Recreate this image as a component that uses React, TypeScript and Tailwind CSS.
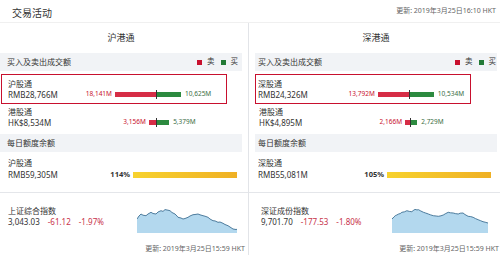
import React from "react";

type Flow = { name: string; total: string; sell: number; buy: number; sellLabel: string; buyLabel: string };

type Panel = {
  title: string;
  north: Flow;
  south: Flow;
  quota: { name: string; value: string; pct: string };
  index: { name: string; value: string; chg: string; pct: string; points: string; update: string };
};

const LEFT: Panel = {
  title: "沪港通",
  north: { name: "沪股通", total: "RMB28,766M", sell: 18141, buy: 10625, sellLabel: "18,141M", buyLabel: "10,625M" },
  south: { name: "港股通", total: "HK$8,534M", sell: 3156, buy: 5379, sellLabel: "3,156M", buyLabel: "5,379M" },
  quota: { name: "沪股通", value: "RMB59,305M", pct: "114%" },
  index: {
    name: "上证综合指数",
    value: "3,043.03",
    chg: "-61.12",
    pct: "-1.97%",
    points:
      "0,10 2,7 4,5 6,6.2 9,6.7 11,5 14,3.3 16,4.5 19,5 21,3 24,1.7 26,2.4 28,0.6 31,1.2 33,1.7 35,3.5 38,5 40,7 41,8.3 44,9 46,10 48,9.5 51,8.3 53,7 56,5.7 58,5.5 61,5 63,5.8 66,6.7 68,7.2 71,8.3 73,10 76,11.7 78,11.9 81,13.3 83,13 86,14.3 88,15.5 91,16.7 93,18 96,20 99,20.5 100,20.3",
    update: "更新: 2019年3月25日15:59 HKT",
  },
};

const RIGHT: Panel = {
  title: "深港通",
  north: { name: "深股通", total: "RMB24,326M", sell: 13792, buy: 10534, sellLabel: "13,792M", buyLabel: "10,534M" },
  south: { name: "港股通", total: "HK$4,895M", sell: 2166, buy: 2729, sellLabel: "2,166M", buyLabel: "2,729M" },
  quota: { name: "深股通", value: "RMB55,081M", pct: "105%" },
  index: {
    name: "深证成份指数",
    value: "9,701.70",
    chg: "-177.53",
    pct: "-1.80%",
    points:
      "0,10 2,8 3.4,6.7 5,6 6.9,5 8.5,4.6 10.3,3.3 13,2.8 15.5,1.7 18,2.4 20.7,2.7 22,1.6 24,0.4 26,0.9 27.6,0.7 30,2 32.8,3.3 35,4 37.9,5 40,5.8 43,6.7 46,7 48.3,7.3 51,6.8 53.4,6 56,4.5 58.6,3.3 61,3.8 63.8,4 66,4.6 69,5 71,4.2 74,4 76,5.5 79.3,7.3 82,7.6 84.5,8.3 87,9.6 89.7,10.7 92,11.6 94.8,12.7 97,13.2 100,14",
    update: "更新: 2019年3月25日15:59 HKT",
  },
};

const SCALE = 442;

function Bars({ f, leftW }: { f: Flow; leftW: string }) {
  return (
    <div className="flex items-center h-[11px]">
      <div className={`${leftW} flex items-center justify-end gap-[3px]`}>
        <span className="text-[6.5px] text-[#c8102e] leading-none">{f.sellLabel}</span>
        <div className="h-[5px] bg-[#d62d46]" style={{ width: f.sell / SCALE }} />
      </div>
      <div className="w-[1px] h-[9px] bg-[#333]" />
      <div className="flex items-center gap-[4px]">
        <div className="h-[5px] bg-[#2c8a3f]" style={{ width: f.buy / SCALE }} />
        <span className="text-[6.5px] text-[#3c6e45] leading-none">{f.buyLabel}</span>
      </div>
    </div>
  );
}

function PanelView({ p, isLeft }: { p: Panel; isLeft: boolean }) {
  const padText = isLeft ? "pl-[8px]" : "pl-[3px]";
  const labelW = "w-[60px]";
  const leftW = isLeft ? "w-[88px]" : "w-[91px]";
  return (
    <div className="w-[242px] flex flex-col">
      <div className="h-[30px] flex items-center justify-center text-[9px] text-[#333]">{p.title}</div>
      <div className={`h-[18px] bg-[#f1f3f6] flex items-center justify-between ${isLeft ? "pl-[7px] pr-[4px]" : "pl-[3px] pr-[1px]"} text-[8px] text-[#333]`}>
        <span>买入及卖出成交额</span>
        <div className="flex items-center text-[7.5px]">
          <span className="w-[5px] h-[5px] bg-[#c8102e]" />
          <span className="ml-[5px]">卖</span>
          <span className="ml-[6px] w-[5px] h-[5px] bg-[#237a36]" />
          <span className="ml-[5px]">买</span>
        </div>
      </div>
      <div className={`mt-[3px] h-[30px] border border-[#c8102e] ${isLeft ? "ml-[1px] w-[226px] pl-[6px]" : "w-[216px] pl-[2px]"} pt-[3px] text-[8px] text-[#333]`}>
        <div className="h-[11px] leading-[11px]">{p.north.name}</div>
        <div className="flex items-center h-[11px]">
          <span className={`${labelW} leading-[11px]`}>{p.north.total}</span>
          <Bars f={p.north} leftW={leftW} />
        </div>
      </div>
      <div className={`h-[30px] pt-[2px] ${isLeft ? "pl-[8px]" : "pl-[4px]"} text-[8px] text-[#333]`}>
        <div className="h-[11px] leading-[11px]">{p.south.name}</div>
        <div className="flex items-center h-[11px]">
          <span className={`${labelW} leading-[11px]`}>{p.south.total}</span>
          <Bars f={p.south} leftW={leftW} />
        </div>
      </div>
      <div className={`h-[18px] bg-[#f1f3f6] flex items-center ${isLeft ? "pl-[7px]" : "pl-[3px]"} text-[8px] text-[#333]`}>
        每日额度余额
      </div>
      <div className={`h-[40px] pt-[5px] ${padText} ${isLeft ? "pr-[5px]" : "pr-[6px]"} text-[8px] text-[#333]`}>
        <div className="h-[11px] leading-[11px]">{p.quota.name}</div>
        <div className="mt-[1px] h-[11px] flex items-center">
          <span className="flex-1 leading-[11px]">{p.quota.value}</span>
          <span className="font-bold text-[7.5px] leading-none">{p.quota.pct}</span>
          <div className="ml-[3px] w-[104px] h-[6px] bg-gradient-to-r from-[#f7d22e] to-[#efb024]" />
        </div>
      </div>
    </div>
  );
}

function IndexView({ p, isLeft }: { p: Panel; isLeft: boolean }) {
  const pts = p.index.points;
  return (
    <div className="w-[242px] flex flex-col">
      <div className="flex pt-[12px]">
        <div className={`flex-1 ${isLeft ? "pl-[8px]" : "pl-[6px]"} text-[8px] text-[#333]`}>
          <div className="h-[11px] leading-[11px]">{p.index.name}</div>
          <div className="h-[11px] leading-[11px] flex">
            <span>{p.index.value}</span>
            <span className="ml-[8px] text-[#c8334a]">{p.index.chg}</span>
            <span className="ml-[8px] text-[#c8334a]">{p.index.pct}</span>
          </div>
        </div>
        <svg
          className={`mt-[4px] h-[24px] ${isLeft ? "w-[100px] mr-[5px]" : "w-[96px] mr-[9px]"}`}
          viewBox="0 0 100 24"
          preserveAspectRatio="none"
        >
          <polygon points={`0,24 ${pts} 100,24`} fill="#b3d8ee" />
          <polyline points={pts} fill="none" stroke="#3d6f93" strokeWidth="0.9" vectorEffect="non-scaling-stroke" />
        </svg>
      </div>
      <div className={`mt-[11px] h-[10px] leading-[10px] text-right text-[7px] text-[#666] ${isLeft ? "-mr-[3px]" : "-mr-[2px]"}`}>
        {p.index.update}
      </div>
    </div>
  );
}

export default function App() {
  return (
    <div
      className="w-[500px] h-[255px] bg-white overflow-hidden flex flex-col"
      style={{ fontFamily: '"Noto Sans", "Noto Sans CJK SC", sans-serif' }}
    >
      <div className="h-[22px] flex items-start justify-between">
        <span className="pl-[12px] pt-[7px] text-[10px] leading-[12px] text-[#333]">交易活动</span>
        <span className="pr-[4px] pt-[6px] text-[7px] leading-[10px] text-[#666]">更新: 2019年3月25日16:10 HKT</span>
      </div>
      <div className="flex flex-1 border-t border-[#f0f0f0]">
        <div className="w-[249px] border-r border-[#e2e4e8] flex flex-col">
          <PanelView p={LEFT} isLeft={true} />
          <div className="border-t border-[#e4e6ea]">
            <IndexView p={LEFT} isLeft={true} />
          </div>
        </div>
        <div className="flex-1 flex flex-col">
          <div className="pl-[6px]">
            <PanelView p={RIGHT} isLeft={false} />
          </div>
          <div className="border-t border-[#e4e6ea] pl-[6px]">
            <IndexView p={RIGHT} isLeft={false} />
          </div>
        </div>
      </div>
    </div>
  );
}
